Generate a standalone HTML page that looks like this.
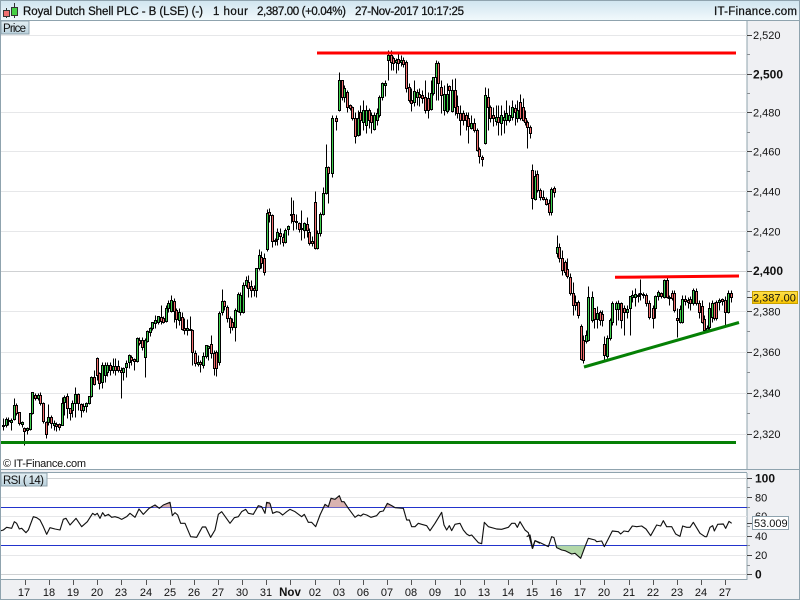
<!DOCTYPE html>
<html><head><meta charset="utf-8"><style>
html,body{margin:0;padding:0;background:#fff}
svg{display:block;font-family:"Liberation Sans",sans-serif}
text{fill:#111}
</style></head><body>
<svg width="800" height="600" viewBox="0 0 800 600" xmlns="http://www.w3.org/2000/svg">
<defs>
<linearGradient id="h" x1="0" y1="0" x2="0" y2="1"><stop offset="0" stop-color="#cfe4ef"/><stop offset="1" stop-color="#f1f9fc"/></linearGradient>
<linearGradient id="l" x1="0" y1="0" x2="0" y2="1"><stop offset="0" stop-color="#e4eff4"/><stop offset="1" stop-color="#b9d0db"/></linearGradient>
<linearGradient id="y" x1="0" y1="0" x2="0" y2="1"><stop offset="0" stop-color="#ffe14d"/><stop offset="1" stop-color="#f8c400"/></linearGradient>
</defs>
<rect width="800" height="600" fill="#eff0f3"/>
<rect x="1" y="21" width="746" height="449" fill="#fff"/>
<rect x="1" y="473" width="746" height="106" fill="#fff"/>
<rect width="800" height="20" fill="url(#h)"/>
<g shape-rendering="crispEdges" fill="none" stroke-width="1">
<path stroke="#8fa3ae" d="M0 .5H800M0 20.5H800M0 469.5H800M1 472.5H747M1 579.5H747M0 599.5H800M.5 0V600M747 21V470M747 473V580M799.5 0V600"/>
<path stroke="#e6e7e9" d="M1 35.5H747M1 112.5H747M1 151.5H747M1 191.5H747M1 231.5H747M1 311.5H747M1 352.5H747M1 393.5H747M1 434.5H747M1 497.5H747M1 516.5H747M1 536.5H747M1 555.5H747"/>
<path stroke="#cfd1d3" d="M1 74.5H747M1 271.5H747M1 478.5H747M1 574.5H747"/>
<path stroke="#2233cc" d="M1 507.5H747M1 545.5H747"/>
<path stroke="#444" d="M747 35.5H752M747 74.5H752M747 112.5H752M747 151.5H752M747 191.5H752M747 231.5H752M747 271.5H752M747 311.5H752M747 352.5H752M747 393.5H752M747 434.5H752M747 297.5H752M747 478.5H752M747 497.5H752M747 536.5H752M747 555.5H752M747 574.5H752M747 523.5H752"/>
<path stroke="#8a8f93" d="M747 54.5H750M747 93.5H750M747 132.5H750M747 171.5H750M747 211.5H750M747 251.5H750M747 291.5H750M747 331.5H750M747 372.5H750M747 413.5H750M747 487.5H750M747 507.5H750M747 526.5H750M747 545.5H750M747 565.5H750"/>
<path stroke="#555" d="M25.5 580V585M49.5 580V585M73.5 580V585M97.5 580V585M121.5 580V585M146.5 580V585M170.5 580V585M194.5 580V585M218.5 580V585M242.5 580V585M266.5 580V585M290.5 580V585M315.5 580V585M339.5 580V585M363.5 580V585M387.5 580V585M411.5 580V585M435.5 580V585M460.5 580V585M484.5 580V585M508.5 580V585M532.5 580V585M556.5 580V585M580.5 580V585M604.5 580V585M629.5 580V585M653.5 580V585M677.5 580V585M701.5 580V585M725.5 580V585"/>
</g>
<!-- logo -->
<g shape-rendering="crispEdges" stroke="#333" stroke-width="1">
<path d="M6.5 8V18M14.5 3V18"/>
<rect x="3.5" y="10.5" width="6" height="6" fill="#f07070"/>
<rect x="11.5" y="7.5" width="6" height="8" fill="#45d045"/>
</g>
<g font-size="11.5" stroke="#111" stroke-width=".25">
<text x="23" y="15" textLength="180">Royal Dutch Shell PLC - B (LSE) (-)</text>
<text x="213" y="15" textLength="35">1 hour</text>
<text x="257" y="15" textLength="89">2,387.00 (+0.04%)</text>
<text x="355" y="15" textLength="109">27-Nov-2017 10:17:25</text>
<text x="714" y="15" textLength="83">IT-Finance.com</text>
</g>
<!-- label boxes -->
<rect x="1" y="21" width="28" height="13" fill="url(#l)" stroke="#8fa3ae" shape-rendering="crispEdges"/>
<text x="3" y="32" font-size="11.5" textLength="23">Price</text>
<rect x="1" y="473" width="46" height="13" fill="url(#l)" stroke="#8fa3ae" shape-rendering="crispEdges"/>
<text x="3" y="484" font-size="11.5" textLength="41">RSI ( 14)</text>
<!-- wicks -->
<g transform="translate(.5 .5)" shape-rendering="crispEdges" stroke="#000" stroke-width="1">
<path fill="none" d="M3 418V430M6 417V427M8 417V425M11 418V430M14 398V420M16 403V415M19 412V425M22 421V427M24 427V445M27 427V434M30 413V430M32 392V414M35 393V400M38 393V400M40 392V405M43 402V423M46 421V438M48 404V425M51 415V428M54 420V430M56 422V431M59 423V430M62 397V425M64 395V415M67 393V418M70 408V420M72 400V417M75 387V417M78 393V410M81 403V417M83 403V412M86 402V412M89 396V404M91 376V397M94 370V385M97 357V380M99 372V389M102 362V388M105 362V382M107 362V376M110 362V375M113 358V373M115 358V375M118 360V372M121 367V398M123 367V380M126 360V377M129 354V368M131 355V365M134 358V370M137 337V362M139 337V345M142 337V350M145 338V377M147 330V342M150 327V336M152 322V330M155 315V328M158 316V324M161 305V324M163 316V323M166 305V322M168 300V312M171 295V312M174 298V322M176 308V328M179 308V325M182 312V330M184 318V334M187 319V335M190 316V330M192 329V365M195 350V366M198 355V366M200 360V372M203 352V368M206 345V358M208 345V360M211 335V358M214 350V375M216 350V376M219 311V365M222 289V315M224 300V310M227 305V322M230 316V333M232 318V330M235 308V341M238 292V312M240 292V315M243 282V313M246 276V287M248 275V297M251 280V297M254 285V296M256 268V297M259 249V270M261 251V268M264 253V275M267 209V251M269 208V222M272 214V247M275 238V245M277 228V245M280 228V244M283 233V246M285 228V243M288 225V235M291 197V223M293 200V230M296 214V229M299 222V232M301 210V240M304 222V238M307 217V237M309 228V245M312 236V246M315 191V249M317 230V249M320 212V236M323 187V215M326 144V194M328 166V203M332 115V177M336 115V130M339 72V111M342 80V100M344 85V102M347 90V112M350 104V110M352 106V120M355 112V143M358 110V136M360 105V135M363 100V130M366 105V133M369 108V128M371 112V133M374 112V130M377 108V125M379 95V117M382 82V100M385 80V96M388 50V80M391 50V70M393 56V70M396 58V73M398 53V70M401 55V66M403 57V67M406 60V92M409 83V102M411 88V111M414 80V106M417 89V105M419 88V106M422 90V103M425 80V113M428 92V118M431 80V110M433 77V95M436 60V100M438 61V100M441 80V113M444 85V115M447 83V113M449 85V110M452 79V112M455 78V115M457 95V118M460 105V135M463 110V125M466 112V130M468 112V143M471 115V129M474 118V132M477 128V151M479 147V163M482 155V166M485 87V144M488 88V130M490 105V122M493 107V126M496 105V125M498 105V135M501 105V135M504 110V133M506 100V125M509 105V122M512 100V120M515 104V125M517 100V122M520 94V120M523 98V121M525 110V125M527 120V148M530 125V138M532 164V209M535 170V200M537 170V192M540 188V200M543 190V200M546 197V205M549 199V215M551 187V215M554 186V197M557 235V257M559 243V262M562 250V275M565 260V275M567 258V278M570 273V295M573 282V315M575 295V310M578 300V318M581 324V360M583 335V363M586 330V343M588 286V341M592 291V322M594 308V328M597 306V328M600 310V325M602 310V326M604 336V360M607 335V358M610 318V340M612 301V325M616 301V325M618 300V320M621 302V328M624 305V335M627 305V318M630 296V335M632 290V302M635 288V306M638 293V302M640 279V300M643 292V298M646 293V306M649 300V319M653 305V328M655 295V318M658 290V300M661 292V298M664 279V298M667 277V298M669 295V305M672 290V300M674 290V312M677 308V337M680 305V323M682 295V323M685 295V305M688 297V308M690 296V310M693 288V305M696 288V305M699 300V318M702 300V323M704 315V331M707 325V332M709 302V330M712 300V322M714 302V320M716 300V320M719 298V310M722 298V305M725 296V325M728 290V313M731 290V302"/>
<path fill="#3fd14f" d="M5 419h2v6h-2zM10 420h2v2h-2zM13 405h2v14h-2zM21 422h2v2h-2zM26 428h2v2h-2zM29 413h2v16h-2zM31 392h2v21h-2zM37 395h2v3h-2zM47 417h2v5h-2zM53 423h2v2h-2zM61 403h2v22h-2zM63 397h2v5h-2zM71 403h2v7h-2zM74 394h2v9h-2zM82 406h2v4h-2zM85 403h2v3h-2zM88 396h2v7h-2zM90 377h2v19h-2zM101 365h2v17h-2zM104 365h2v10h-2zM106 365h2v7h-2zM112 366h2v4h-2zM122 368h2v4h-2zM125 363h2v4h-2zM128 355h2v7h-2zM136 338h2v23h-2zM144 340h2v17h-2zM146 331h2v10h-2zM149 328h2v4h-2zM151 322h2v6h-2zM154 320h2v3h-2zM157 316h2v6h-2zM165 308h2v13h-2zM167 303h2v5h-2zM170 300h2v11h-2zM178 312h2v8h-2zM186 328h2v2h-2zM197 362h2v2h-2zM202 356h2v9h-2zM205 345h2v11h-2zM207 346h2v2h-2zM218 313h2v49h-2zM221 301h2v11h-2zM234 310h2v17h-2zM237 294h2v17h-2zM239 295h2v17h-2zM242 285h2v27h-2zM245 280h2v5h-2zM255 268h2v22h-2zM258 255h2v13h-2zM266 213h2v36h-2zM276 232h2v7h-2zM284 230h2v12h-2zM287 226h2v3h-2zM303 223h2v7h-2zM316 233h2v15h-2zM319 214h2v19h-2zM322 193h2v21h-2zM325 167h2v26h-2zM331 118h2v55h-2zM338 80h2v30h-2zM343 88h2v9h-2zM357 118h2v17h-2zM362 110h2v12h-2zM365 110h2v15h-2zM373 115h2v14h-2zM376 113h2v7h-2zM378 97h2v18h-2zM381 83h2v14h-2zM384 83h2v2h-2zM387 55h2v5h-2zM395 60h2v2h-2zM400 60h2v2h-2zM413 91h2v11h-2zM416 92h2v5h-2zM430 93h2v16h-2zM432 77h2v16h-2zM435 63h2v14h-2zM443 94h2v16h-2zM446 94h2v17h-2zM451 90h2v21h-2zM470 123h2v5h-2zM484 95h2v48h-2zM495 117h2v4h-2zM500 115h2v8h-2zM503 117h2v3h-2zM505 113h2v7h-2zM508 115h2v5h-2zM511 107h2v10h-2zM516 110h2v8h-2zM534 176h2v23h-2zM550 189h2v23h-2zM556 247h2v6h-2zM585 335h2v6h-2zM587 297h2v43h-2zM591 297h2v23h-2zM596 313h2v6h-2zM606 338h2v18h-2zM609 320h2v18h-2zM611 303h2v19h-2zM615 303h2v6h-2zM617 303h2v6h-2zM626 309h2v3h-2zM629 296h2v12h-2zM631 295h2v2h-2zM634 294h2v3h-2zM642 294h2v1h-2zM654 296h2v12h-2zM657 292h2v4h-2zM663 280h2v17h-2zM679 309h2v13h-2zM681 299h2v23h-2zM692 290h2v13h-2zM706 328h2v3h-2zM708 308h2v19h-2zM711 303h2v14h-2zM718 300h2v2h-2zM727 293h2v19h-2z"/>
<path fill="#f26f6f" d="M2 425h2v1h-2zM7 420h2v1h-2zM15 405h2v8h-2zM18 412h2v11h-2zM23 428h2v3h-2zM34 395h2v3h-2zM39 395h2v8h-2zM42 403h2v18h-2zM45 422h2v12h-2zM50 417h2v6h-2zM55 424h2v2h-2zM58 424h2v3h-2zM66 396h2v12h-2zM69 408h2v5h-2zM77 394h2v9h-2zM80 404h2v6h-2zM93 377h2v7h-2zM96 358h2v17h-2zM98 373h2v10h-2zM109 365h2v5h-2zM114 366h2v4h-2zM117 366h2v4h-2zM120 370h2v2h-2zM130 357h2v3h-2zM133 359h2v2h-2zM138 340h2v3h-2zM141 340h2v7h-2zM160 317h2v4h-2zM162 318h2v4h-2zM173 301h2v10h-2zM175 310h2v9h-2zM181 317h2v12h-2zM183 328h2v2h-2zM189 329h2v1h-2zM191 330h2v22h-2zM194 353h2v10h-2zM199 362h2v2h-2zM210 344h2v9h-2zM213 353h2v15h-2zM215 352h2v16h-2zM223 301h2v5h-2zM226 307h2v11h-2zM229 318h2v9h-2zM231 322h2v5h-2zM247 282h2v6h-2zM250 286h2v4h-2zM253 288h2v2h-2zM260 257h2v6h-2zM263 258h2v14h-2zM268 212h2v3h-2zM271 215h2v26h-2zM274 240h2v1h-2zM279 233h2v3h-2zM282 237h2v5h-2zM290 214h2v1h-2zM292 214h2v7h-2zM295 221h2v1h-2zM298 223h2v6h-2zM300 228h2v1h-2zM306 224h2v6h-2zM308 232h2v11h-2zM311 241h2v2h-2zM314 202h2v46h-2zM327 167h2v6h-2zM335 118h2v3h-2zM341 80h2v17h-2zM346 92h2v15h-2zM349 105h2v3h-2zM351 107h2v11h-2zM354 118h2v18h-2zM359 112h2v8h-2zM368 110h2v10h-2zM370 115h2v7h-2zM390 55h2v7h-2zM392 58h2v5h-2zM397 59h2v4h-2zM402 60h2v4h-2zM405 62h2v26h-2zM408 87h2v13h-2zM410 100h2v3h-2zM418 94h2v3h-2zM421 95h2v3h-2zM424 97h2v13h-2zM427 98h2v12h-2zM437 63h2v20h-2zM440 87h2v8h-2zM448 86h2v4h-2zM454 90h2v17h-2zM456 106h2v7h-2zM459 113h2v7h-2zM462 113h2v7h-2zM465 115h2v5h-2zM467 118h2v8h-2zM473 123h2v7h-2zM476 130h2v20h-2zM478 149h2v7h-2zM481 157h2v2h-2zM487 97h2v10h-2zM489 107h2v11h-2zM492 115h2v3h-2zM497 117h2v5h-2zM514 108h2v4h-2zM519 102h2v16h-2zM522 107h2v13h-2zM524 118h2v4h-2zM526 122h2v5h-2zM529 127h2v6h-2zM531 170h2v28h-2zM536 174h2v16h-2zM539 190h2v7h-2zM542 197h2v2h-2zM545 199h2v5h-2zM548 203h2v9h-2zM553 188h2v4h-2zM558 247h2v11h-2zM561 258h2v12h-2zM564 262h2v10h-2zM566 269h2v7h-2zM569 277h2v16h-2zM572 293h2v12h-2zM574 302h2v3h-2zM577 302h2v13h-2zM580 326h2v33h-2zM582 340h2v20h-2zM593 308h2v11h-2zM599 312h2v8h-2zM601 314h2v6h-2zM603 344h2v11h-2zM620 303h2v17h-2zM623 308h2v4h-2zM637 295h2v1h-2zM639 293h2v1h-2zM645 295h2v8h-2zM648 303h2v14h-2zM652 308h2v10h-2zM660 293h2v3h-2zM666 280h2v17h-2zM668 297h2v1h-2zM671 293h2v5h-2zM673 293h2v17h-2zM676 318h2v2h-2zM684 299h2v2h-2zM687 300h2v2h-2zM689 299h2v4h-2zM695 291h2v12h-2zM698 303h2v9h-2zM701 306h2v16h-2zM703 319h2v11h-2zM713 303h2v15h-2zM715 302h2v16h-2zM721 299h2v2h-2zM724 300h2v12h-2zM730 293h2v4h-2z"/>
</g>
<!-- trend lines -->
<path d="M317 53H736" stroke="#ff0000" stroke-width="3" fill="none"/>
<path d="M615 277.3L739 276" stroke="#ff0000" stroke-width="3" fill="none"/>
<path d="M1 442.5H736" stroke="#058005" stroke-width="3" fill="none"/>
<path d="M584 367L739 322.5" stroke="#058005" stroke-width="3" fill="none"/>
<text x="3" y="467" font-size="11" textLength="83">© IT-Finance.com</text>
<!-- axis labels -->
<g font-size="11">
<text x="753" y="39">2,520</text><text x="753" y="116.5">2,480</text><text x="753" y="155.5">2,460</text><text x="753" y="195.5">2,440</text><text x="753" y="235.5">2,420</text><text x="753" y="315.5">2,380</text><text x="753" y="356">2,360</text><text x="753" y="397">2,340</text><text x="753" y="438">2,320</text>
</g>
<g font-size="12" font-weight="700"><text x="753" y="78.5">2,500</text><text x="753" y="275">2,400</text><text x="755" y="482.5">100</text><text x="755" y="578.5">0</text></g>
<rect x="752.5" y="291.5" width="45" height="12" fill="url(#y)" stroke="#c8a000" stroke-width=".6" shape-rendering="crispEdges"/>
<text x="753" y="301.5" font-size="11">2,387.00</text>
<g font-size="11"><text x="755" y="501.5">80</text><text x="755" y="520">60</text><text x="755" y="540">40</text><text x="755" y="559">20</text></g>
<rect x="752.5" y="516.5" width="36" height="13" fill="#fff" stroke="#8fa3ae" shape-rendering="crispEdges"/>
<text x="754" y="527" font-size="11">53.009</text>
<!-- rsi -->
<g transform="translate(0 465) scale(.33333)" fill="#d9b3b0">
<polygon points="460,127 465,120 472,127"/><polygon points="480,127 490,120 510,112 515,127"/><polygon points="770,127 775,122 785,125 790,127"/><polygon points="797,127 800,112 810,110 810,127"/>
<polygon points="810,127 810,115 814,127"/><polygon points="973,127 975,118 985,125 993,100 1005,103 1018,92 1025,110 1032,110 1042,127"/><polygon points="1153,127 1162,115 1175,122 1185,127"/>
</g>
<g transform="translate(530 465) scale(.33333)"><polygon fill="#b2d8a8" points="72,241 80,248 95,255 105,257 125,267 135,265 152,280 165,245 167,241"/></g>
<g fill="none" stroke="#111" stroke-width="3.4" stroke-linejoin="round">
<polyline transform="translate(0 465) scale(.33333)" points="3,197 10,195 20,187 35,190 43,170 50,175 58,192 65,190 78,203 85,195 100,155 110,158 120,165 130,185 140,208 150,188 165,192 180,195 190,163 198,160 210,180 228,160 245,185 262,170 278,145 285,150 292,145 300,160 308,143 315,153 325,148 335,157 345,155 355,158 365,163 380,155 390,145 405,157 417,132 430,148 447,130 465,120 478,130 490,120 510,112 517,152 525,143 533,150 542,175 555,175 572,215 590,217 607,186 617,186 632,217 645,195 655,148 665,140 690,175 703,158 715,155 725,140 737,133 745,145 760,148 775,122 785,125 795,145 800,112 810,115"/>
<polyline transform="translate(270 465) scale(.33333)" points="0,115 8,145 20,140 28,142 38,150 50,140 60,133 75,140 95,155 103,148 115,172 125,172 137,185 150,150 165,118 175,125 183,100 195,103 208,92 215,110 222,110 235,130 255,157 265,150 272,153 280,147 290,150 303,157 320,152 330,140 340,138 352,115 365,122 375,128 400,130 410,165 418,165 425,185 435,185 445,175 455,178 470,182 480,197 495,175 515,142 522,180 530,195 538,182 545,197 555,178 570,175 580,195 590,207 598,212 605,210 625,233 635,236 643,172 655,185 680,192 695,193 715,187 725,175 735,175 742,187 750,170 765,195 775,203 787,250 795,227 810,235"/>
<polyline transform="translate(530 465) scale(.33333)" points="-10,215 0,210 8,250 15,227 30,233 55,245 65,215 72,218 80,248 95,255 105,257 125,267 135,265 152,280 165,245 175,220 195,225 200,230 215,228 223,245 247,198 265,200 272,207 282,198 295,200 307,183 320,185 335,183 348,192 362,212 380,180 392,183 400,167 410,185 425,185 437,207 450,214 458,183 470,187 480,187 490,172 510,205 525,215 530,215 540,187 548,182 553,198 563,178 580,177 587,190 597,169 605,175"/>
</g>
<!-- time axis -->
<g font-size="11" text-anchor="middle">
<text x="24" y="596">17</text><text x="49" y="596">18</text><text x="73" y="596">19</text><text x="97" y="596">20</text><text x="121" y="596">23</text><text x="146" y="596">24</text><text x="170" y="596">25</text><text x="194" y="596">26</text><text x="218" y="596">27</text><text x="242" y="596">30</text><text x="266" y="596">31</text><text x="290" y="596" font-weight="700" font-size="11.5">Nov</text><text x="315" y="596">02</text><text x="339" y="596">03</text><text x="363" y="596">06</text><text x="387" y="596">07</text><text x="411" y="596">08</text><text x="435" y="596">09</text><text x="460" y="596">10</text><text x="484" y="596">13</text><text x="508" y="596">14</text><text x="532" y="596">15</text><text x="556" y="596">16</text><text x="580" y="596">17</text><text x="604" y="596">20</text><text x="629" y="596">21</text><text x="653" y="596">22</text><text x="677" y="596">23</text><text x="701" y="596">24</text><text x="725" y="596">27</text>
</g>
</svg>
</body></html>
